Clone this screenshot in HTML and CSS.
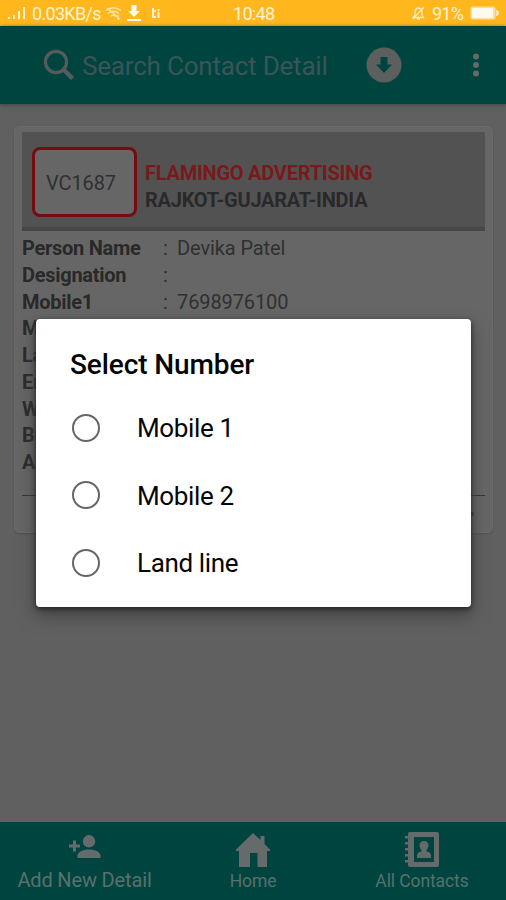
FILE: index.html
```html
<!DOCTYPE html>
<html lang="en">
<head>
<meta charset="utf-8">
<title>Contact Detail</title>
<link rel="stylesheet" href="styles.css">
</head>
<body>
<div class="screen">
  <div class="status">
    <svg class="signal" width="20" height="14" viewBox="0 0 20 14"><path d="M1 11h2v2H1zM6 9h2v4H6zM11 5h2v8h-2zM16 1h2v12h-2z"/></svg>
    <span class="speed">0.03KB/s</span>
    <svg class="wifi" width="17" height="15" viewBox="0 0 17 15"><path d="M1 4.500Q8 -1 16 4.500M3 7.500Q8 3 14 7.500M5.500 10.500Q8 8 11 10.500M2 2l13 11M13 9v5"/></svg>
    <svg class="download" width="14" height="16" viewBox="0 0 14 16"><path d="M4.500 0h5v6H13L7 12 1 6h3.500zM0 14h14v2H0z"/></svg>
    <svg class="dots" width="8" height="12" viewBox="0 0 8 12"><path d="M0 1h2v2h2v2H2v4h2v2H0zM5.500 2h2v2h-2zM5.500 5h2v6h-2z"/></svg>
    <span class="clock">10:48</span>
    <svg class="bell" width="13" height="14" viewBox="0 0 13 14"><path d="M1 11.500h10.500L10 9V5Q9 2 6.500 2T3 5v4zM5 13h3M1 13L12 1"/></svg>
    <span class="percent">91%</span>
    <svg class="battery" width="29" height="14" viewBox="0 0 29 14"><rect x=".5" y=".5" width="25" height="13" rx="2.500" opacity=".6"/><rect x="2" y="2" width="21" height="10" rx="1"/><path d="M26 4q3 0 3 3t-3 3z" opacity=".7"/></svg>
  </div>
  <header class="bar">
    <svg class="search" width="32" height="32" viewBox="0 0 32 32"><circle cx="13" cy="13" r="10.600"/><path d="M20.500 20.500l9 9" stroke-width="4.500"/></svg>
    <span class="query">Search Contact Detail</span>
    <svg class="circle-down" width="36" height="36" viewBox="0 0 36 36"><circle cx="18" cy="18" r="17.500" fill="#5b5f5e"/><path d="M14.500 10h7v7.500h4.500L18 26l-8-8.500h4.500z" fill="#00443f"/></svg>
    <svg class="more" width="8" height="24" viewBox="0 0 8 24"><circle cx="4" cy="3.500" r="3"/><circle cx="4" cy="12" r="3"/><circle cx="4" cy="20.500" r="3"/></svg>
  </header>
  <main class="content">
    <section class="card">
      <div class="card-head">
        <div class="code"><span>VC1687</span></div>
        <div class="titles">
          <span class="company">FLAMINGO ADVERTISING</span>
          <span class="place">RAJKOT-GUJARAT-INDIA</span>
        </div>
      </div>
      <div class="rows">
        <div class="row"><b>Person Name</b><i>:</i><span>Devika Patel</span></div>
        <div class="row"><b>Designation</b><i>:</i></div>
        <div class="row"><b>Mobile1</b><i>:</i><span>7698976100</span></div>
        <div class="row"><b>M</b></div>
        <div class="row"><b>La</b></div>
        <div class="row"><b>Er</b></div>
        <div class="row"><b>W</b></div>
        <div class="row"><b>Bu</b></div>
        <div class="row"><b>A</b></div>
      </div>
      <div class="card-foot"><span class="mark"></span></div>
    </section>
  </main>
  <nav class="tabs">
    <div class="tab add">
      <svg width="34" height="34" viewBox="0 0 34 34"><path d="M2 14.500h4v-4h3v4h4v3H9v4H6v-4H2z"/><circle cx="22" cy="11.300" r="6.200"/><path d="M10.500 28v-2.500C11 21 18 19.500 22 19.500s11 1.500 11.500 6V28z"/></svg>
      <span>Add New Detail</span>
    </div>
    <div class="tab home">
      <svg width="34" height="34" viewBox="0 0 34 34"><path d="M17 0l7.500 7V3h4v8l5.500 5.500V18h-3v16h-9.500V20H14v14H3V18H0v-1.500z"/></svg>
      <span>Home</span>
    </div>
    <div class="tab all">
      <svg width="36" height="35" viewBox="0 0 36 35"><path fill-rule="evenodd" d="M6 0h27q2 0 2 2v31q0 2-2 2H6q-2 0-2-2V2q0-2 2-2zM10 5v25h20V5z"/><path d="M1 4h6v2.500H1zM1 10h6v2.500H1zM1 16h6v2.500H1zM1 22h6v2.500H1zM1 28h6v2.500H1z"/><path d="M20 9q4.500 0 4.500 4.500 0 3-2 4.500v1.500q4.500.5 4.500 4V26H13v-2.500q0-3.500 4.500-4V18q-2-1.500-2-4.500Q15.500 9 20 9z"/></svg>
      <span>All Contacts</span>
    </div>
  </nav>
  <div class="dialog">
    <h1>Select Number</h1>
    <label class="option"><span class="radio"></span><span class="name">Mobile 1</span></label>
    <label class="option"><span class="radio"></span><span class="name">Mobile 2</span></label>
    <label class="option"><span class="radio"></span><span class="name">Land line</span></label>
  </div>
</div>
</body>
</html>
```
FILE: styles.css
```css
* { box-sizing: border-box; }
body { margin: 0; font-family: Roboto, "Liberation Sans", sans-serif; }
svg { display: block; flex: none; }
span, b, i, h1 { white-space: nowrap; }
.screen { position: relative; display: flex; flex-direction: column; width: 506px; height: 900px; overflow: hidden; background: #606060; }
.status { display: flex; align-items: center; height: 26px; padding-left: 7px; background: #ffb71d; color: #fff3d2; fill: #fff3d2; font-size: 18px; flex: none; }
.speed { width: 68px; margin-left: 5px; letter-spacing: -0.7px; }
.wifi { margin-left: 5px; fill: none; stroke: #ffe4a5; stroke-width: 1.5; }
.download { margin-left: 5px; fill: #fffaf0; }
.dots { margin-left: 11px; }
.clock { width: 42px; margin-left: 73px; letter-spacing: -0.7px; }
.bell { margin-left: 137px; fill: none; stroke: #ffedbf; stroke-width: 1.3; }
.percent { width: 32px; margin-left: 7px; letter-spacing: -0.8px; }
.battery { margin-left: 6px; fill: #fffaf0; }
.bar { display: flex; align-items: center; height: 78px; padding-left: 43px; background: #00443f; box-shadow: 0 1px 4px #3c4746; flex: none; }
.search { fill: none; stroke: #555c5b; stroke-width: 3.2; }
.query { width: 246px; margin: 2px 0 0 7px; font-size: 26px; letter-spacing: -0.2px; color: #3b5557; }
.circle-down { margin-left: 38px; }
.more { margin-left: 70px; fill: #666968; }
.content { flex: 1; padding: 22px 13px 0 14px; }
.card { height: 407px; padding: 5px 7px 0; border: 1px solid #6b6b6b; border-radius: 5px; background: #666; box-shadow: 0 1px 2px #505050; }
.card-head { display: flex; height: 99px; padding: 15px 0 0 10px; background: #525252; border-bottom: 4px solid #474747; }
.code { width: 105px; height: 70px; padding: 21px 0 0 11px; border: 3px solid #760c0f; border-radius: 8px; background: #666; color: #303030; font-size: 20px; line-height: 24px; letter-spacing: -0.1px; }
.titles { display: flex; flex-direction: column; margin: 13px 0 0 8px; font-size: 20px; line-height: 27px; font-weight: 700; letter-spacing: -0.24px; }
.company { color: #79191b; }
.place { color: #292929; }
.rows { padding-top: 4px; }
.row { display: flex; height: 26.75px; line-height: 27px; font-size: 20px; letter-spacing: -0.1px; color: #303030; }
.row b { width: 141px; color: #292929; letter-spacing: -0.28px; }
.row i { width: 14px; font-style: normal; }
.card-foot { display: flex; justify-content: flex-end; height: 38px; margin-top: 19px; padding: 16px 11px 0 0; border-top: 1px solid #333; }
.mark { width: 4px; height: 4px; border-radius: 2px; background: #761829; }
.tabs { display: grid; grid-template-columns: 169px 168px 169px; height: 78px; background: #00443f; fill: #646b6a; color: #59706e; flex: none; }
.tab { display: flex; flex-direction: column; align-items: center; }
.add { padding-top: 8px; }
.add svg { margin-right: 2px; }
.add span { margin-top: 4px; font-size: 20px; line-height: 24px; letter-spacing: -0.15px; }
.home { padding-top: 11px; }
.home span, .all span { margin-top: 4px; font-size: 17.5px; line-height: 20px; letter-spacing: -0.1px; }
.all { padding: 10px 0 0 1px; }
.dialog { position: absolute; left: 36px; top: 319px; width: 435px; height: 288px; padding: 29px 34px 0; border-radius: 4px; background: #fff; box-shadow: 0 2px 5px #252525, 0 8px 18px #404040; color: #050505; }
.dialog h1 { margin: 0 0 12px; font-size: 28px; line-height: 34px; font-weight: 500; letter-spacing: -0.1px; }
.option { display: flex; align-items: center; height: 67.5px; }
.radio { width: 28px; height: 28px; margin-left: 2px; border: 2.5px solid #666; border-radius: 50%; }
.name { margin: 1px 0 0 37px; font-size: 26px; line-height: 30px; letter-spacing: -0.35px; }
```
